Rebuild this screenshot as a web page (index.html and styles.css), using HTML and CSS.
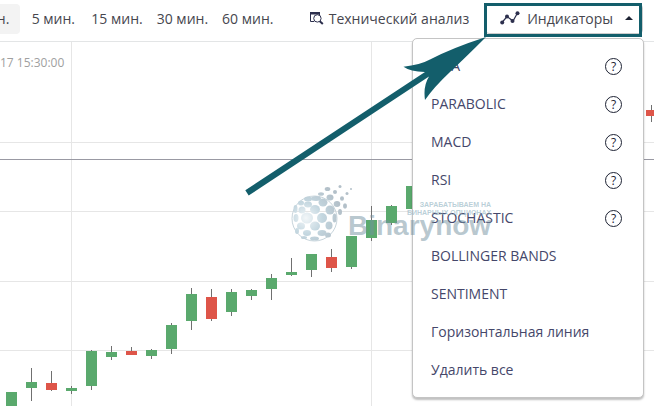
FILE: index.html
```
<!DOCTYPE html>
<html lang="ru">
<head>
<meta charset="utf-8">
<title>График</title>
<link rel="stylesheet" href="styles.css">
</head>
<body>
<div class="app">
  <header class="toolbar">
    <nav class="frames">
      <button class="tool frame frame-active" type="button">1 мин.</button>
      <button class="tool frame" type="button">5 мин.</button>
      <button class="tool frame" type="button">15 мин.</button>
      <button class="tool frame" type="button">30 мин.</button>
      <button class="tool frame" type="button">60 мин.</button>
    </nav>
    <button class="tool analysis" type="button">
      <svg class="icon" width="14" height="14" viewBox="0 0 14 14" fill="none" stroke="#2c2f4d">
        <path d="M4 10.5H.5V1.500h9V4"/>
        <path d="M0 1h10v2.500H0z" fill="#2c2f4d" stroke="none"/>
        <circle cx="7.4" cy="7.4" r="3.7"/>
        <path d="M9.8 10.200l3 2.800" stroke-width="2"/>
      </svg>
      Технический анализ
    </button>
    <div class="indicators">
      <button class="tool indicators-button" type="button" aria-expanded="true">
        <svg class="icon" width="20" height="14" viewBox="0 0 20 14" fill="#2c2f4d">
          <path d="M2 11.5L7 5.500l6 4.500L17.500 2" fill="none" stroke="#2c2f4d" stroke-width="1.200"/>
          <circle cx="2.200" cy="11.500" r="2"/><circle cx="7" cy="5.500" r="2"/><circle cx="12.500" cy="10" r="2"/><circle cx="17.500" cy="2.300" r="2"/>
        </svg>
        Индикаторы
        <span class="caret"></span>
      </button>
      <ul class="menu">
        <li class="row"><button class="item" type="button">SMA</button><button class="help" type="button" aria-label="Справка">?</button></li>
        <li class="row"><button class="item" type="button">PARABOLIC</button><button class="help" type="button" aria-label="Справка">?</button></li>
        <li class="row"><button class="item" type="button">MACD</button><button class="help" type="button" aria-label="Справка">?</button></li>
        <li class="row"><button class="item" type="button">RSI</button><button class="help" type="button" aria-label="Справка">?</button></li>
        <li class="row"><button class="item" type="button">STOCHASTIC</button><button class="help" type="button" aria-label="Справка">?</button></li>
        <li class="row"><button class="item" type="button">BOLLINGER BANDS</button></li>
        <li class="row"><button class="item" type="button">SENTIMENT</button></li>
        <li class="row"><button class="item" type="button">Горизонтальная линия</button></li>
        <li class="row"><button class="item" type="button">Удалить все</button></li>
      </ul>
    </div>
  </header>
  <main class="chart">
    <time class="stamp">17 15:30:00</time>
    <svg class="plot" width="100%" height="100%" shape-rendering="crispEdges">
      <g transform="translate(0 -42)">
        <g class="grid">
          <rect x="0" y="142" width="100%" height="1"/><rect x="0" y="211" width="100%" height="1"/>
          <rect x="0" y="281" width="100%" height="1"/><rect x="0" y="350" width="100%" height="1"/>
          <rect x="71" y="42" width="1" height="100%"/><rect x="371" y="42" width="1" height="100%"/>
        </g>
        <rect class="price" x="0" y="159" width="100%" height="1"/>
        <path class="wick" d="M31.500 368V401M51.500 371V391M71.500 386V394M91.500 350V390M111.500 346V360M131.500 347V355M151.500 349V359M171.500 323V354M191.500 288V330M211.500 289V321M231.500 289V316M251.500 289V300M271.500 274V300M291.500 258V276M311.500 254V277M331.500 249V272M351.500 236V269M371.500 206V241M391.500 205V225M651.500 105V122"/>
        <path class="up" d="M6 392h11v40h-11zM26 382h11v6h-11zM66 388h11v3h-11zM86 351h11v35h-11zM106 352h11v5h-11zM146 350h11v6h-11zM166 325h11v24h-11zM186 294h11v27h-11zM226 292h11v20h-11zM246 290h11v6h-11zM266 278h11v11h-11zM286 272h11v3h-11zM306 254h11v16h-11zM346 236h11v31h-11zM366 220h11v18h-11zM386 206h11v17h-11zM406 186h11v23h-11z"/>
        <path class="down" d="M46 383h11v7h-11zM126 351h11v4h-11zM206 297h11v22h-11zM326 257h11v11h-11zM646 110h11v6h-11z"/>
      </g>
    </svg>
  </main>
  <div class="watermark">
    <svg class="ball" width="66" height="62" viewBox="0 0 66 62">
      <defs>
        <radialGradient id="shade" gradientUnits="userSpaceOnUse" cx="16" cy="36" r="36">
          <stop offset="0" stop-color="#f2f6f8"/><stop offset=".45" stop-color="#c4d7e0"/><stop offset="1" stop-color="#b3c0c9"/>
        </radialGradient>
      </defs>
      <circle cx="24.500" cy="36.500" r="22.500" fill="none" stroke="#c8d5dc"/>
      <g fill="url(#shade)">
        <ellipse cx="18" cy="17" rx="4" ry="2.500"/><ellipse cx="26" cy="16.500" rx="5" ry="2.500"/>
        <ellipse cx="11" cy="21" rx="3" ry="2.500"/><ellipse cx="18" cy="22.500" rx="4" ry="3"/><ellipse cx="25" cy="27.500" rx="5" ry="4.500"/><ellipse cx="33" cy="20.500" rx="4.500" ry="4"/>
        <ellipse cx="5.500" cy="27" rx="2" ry="4"/><ellipse cx="12" cy="28" rx="3.500" ry="3.500"/><ellipse cx="40" cy="28" rx="4.500" ry="4.500"/>
        <ellipse cx="6" cy="36" rx="2.500" ry="4"/><ellipse cx="17" cy="36" rx="6" ry="5.500"/><ellipse cx="32" cy="36" rx="5" ry="5"/><ellipse cx="44.500" cy="36" rx="2" ry="4.500"/>
        <ellipse cx="11" cy="44" rx="4" ry="3.500"/><ellipse cx="25" cy="44" rx="5" ry="4.500"/><ellipse cx="39" cy="43.500" rx="3.500" ry="4"/>
        <ellipse cx="7" cy="49" rx="2" ry="3"/><ellipse cx="17" cy="51" rx="4" ry="3"/><ellipse cx="32" cy="51" rx="4.500" ry="3"/>
        <ellipse cx="24.500" cy="56.500" rx="4.500" ry="2"/><ellipse cx="38" cy="53" rx="3" ry="2.500"/><ellipse cx="14" cy="55.500" rx="3" ry="1.500"/>
        <ellipse cx="31" cy="12" rx="3" ry="1.800"/><ellipse cx="40" cy="15.500" rx="3.500" ry="3"/><ellipse cx="47" cy="22" rx="3.300" ry="3"/>
        <ellipse cx="37.500" cy="7" rx="2.800" ry="2"/><ellipse cx="45" cy="10" rx="2" ry="2"/><ellipse cx="52" cy="16.500" rx="2" ry="2.200"/>
        <ellipse cx="50" cy="30" rx="2" ry="3"/><ellipse cx="55" cy="24" rx="2" ry="2.700"/><circle cx="50" cy="4.500" r="1.500"/><circle cx="57" cy="11.500" r="1.500"/><circle cx="61" cy="7" r="1"/>
      </g>
    </svg>
    <div class="brand">
      <span class="slogan">ЗАРАБАТЫВАЕМ НА<br>БИНАРНЫХ ОПЦИОНАХ</span>
      <span class="name">Binarynow</span>
    </div>
  </div>
  <div class="highlight"></div>
  <svg class="arrow" width="242" height="162" viewBox="245 36 242 162">
    <path d="M245.300 190.300L425 72Q410 71.500 403.500 66.700Q420 65 430 59.500Q452 48 486 37Q465 58 450 72Q434 87 425 100Q423 86 429 76.500L248.700 195.500Z" fill="#135e6b"/>
  </svg>
</div>
</body>
</html>
```
FILE: styles.css
```
* { box-sizing: border-box; }

body {
  margin: 0;
  background: #fff;
  font-family: "Open Sans", "Noto Sans", sans-serif;
}

button {
  margin: 0;
  padding: 0;
  border: 0;
  background: none;
  color: inherit;
  font: inherit;
}

.app {
  position: relative;
  display: flex;
  flex-direction: column;
  min-height: 100vh;
  overflow: hidden;
}

.toolbar {
  display: flex;
  align-items: flex-start;
  height: 42px;
  padding: 4px 11px 0 0;
  border-bottom: 1px solid #e3e5e6;
  color: #46464e;
  font-size: 14px;
}

.frames {
  display: flex;
  margin-left: -45px;
}

.tool {
  display: flex;
  align-items: center;
  justify-content: center;
  height: 30px;
  padding-bottom: 2px;
  white-space: nowrap;
}

.frame {
  min-width: 62px;
  padding: 0 7px 2px;
}

.frame-active {
  margin-right: 2px;
  padding: 0 11px 2px;
  border-radius: 4px;
  background: #f3f3f3;
}

.analysis {
  gap: 5px;
  margin-left: auto;
}

.icon { flex: none; }

.indicators {
  position: relative;
  margin-left: 16px;
}

.indicators-button {
  gap: 7px;
  padding: 0 9px 2px 14px;
  border: 1px solid #ccc;
  border-radius: 4px;
}

.caret {
  margin-left: 5px;
  border: 4px solid transparent;
  border-top: 0;
  border-bottom-color: #1d2233;
}

.menu {
  position: absolute;
  top: 34px;
  right: -1px;
  z-index: 1;
  width: 232px;
  margin: 0;
  padding: 8px 18px;
  border: 1px solid #c4c4c4;
  border-radius: 5px;
  background: #fff;
  box-shadow: 0 2px 2px rgba(0, 0, 0, 0.25);
  color: #45476a;
  list-style: none;
}

.row {
  display: flex;
  align-items: center;
  justify-content: space-between;
  height: 38px;
}

.item { padding-bottom: 2px; }

.help {
  width: 17px;
  height: 17px;
  margin-right: 3px;
  border: 1px solid #1d2233;
  border-radius: 50%;
  color: #1d2233;
  font-size: 12px;
  line-height: 15px;
}

.chart {
  position: relative;
  flex: 1;
}

.plot {
  position: absolute;
  inset: 0;
}

.grid { fill: #e6e6e6; }
.price { fill: #9999a3; }
.wick { stroke: #707070; }
.up { fill: #5aa96d; }
.down { fill: #de5549; }

.stamp {
  position: absolute;
  top: 12px;
  left: 0;
  color: #a0a0a0;
  font-size: 12px;
  line-height: 17px;
}

.watermark {
  position: absolute;
  top: 182px;
  left: 290px;
  z-index: 2;
  display: flex;
  pointer-events: none;
}

.brand {
  display: flex;
  flex-direction: column;
  margin-left: -8px;
  padding-top: 19px;
  font-family: "Liberation Sans", sans-serif;
  font-weight: bold;
}

.slogan {
  color: rgba(140, 175, 190, 0.6);
  font-size: 7px;
  line-height: 8px;
  text-align: right;
}

.name {
  color: rgba(115, 145, 160, 0.5);
  font-size: 28px;
  line-height: 18px;
}

.highlight {
  position: absolute;
  top: 3px;
  right: 12px;
  z-index: 3;
  width: 158px;
  height: 34px;
  border: 3px solid #135e6b;
}

.arrow {
  position: absolute;
  top: 36px;
  right: 167px;
  z-index: 3;
}
```
